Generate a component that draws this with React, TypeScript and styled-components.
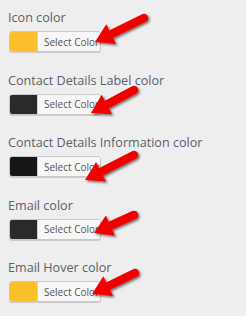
import React from "react";
import styled, { createGlobalStyle } from "styled-components";

const Global = createGlobalStyle`
  html, body { margin: 0; padding: 0; background: #eeeeee; }
  body { font-family: "Open Sans", "Noto Sans", sans-serif; }
`;

const Page = styled.div`
  position: relative;
  width: 246px;
  height: 316px;
  box-sizing: border-box;
  padding: 8px 8px 0 8px;
  overflow: hidden;
`;

const Field = styled.div`
  margin-bottom: 18.5px;
`;

const Label = styled.span`
  display: block;
  font-size: 12.6px;
  line-height: 20px;
  color: #5a6068;
  margin-bottom: 3px;
  white-space: nowrap;
`;

const ColorButton = styled.button`
  display: flex;
  align-items: stretch;
  box-sizing: border-box;
  width: 92px;
  height: 21px;
  padding: 0;
  margin: 0 0 0 1px;
  border: 1px solid #c8c8c8;
  border-radius: 3px;
  box-shadow: 0 1px 0 #cccccc;
  background: #f7f7f7;
  overflow: hidden;
  cursor: pointer;
`;

const Swatch = styled.span<{ $color: string }>`
  width: 27px;
  flex: none;
  background: ${(p) => p.$color};
`;

const ButtonText = styled.span`
  flex: 1;
  display: flex;
  align-items: center;
  padding-left: 6px;
  background: #f7f7f7;
  border-left: 1px solid #d0d0d0;
  font-family: "Open Sans", "Noto Sans", sans-serif;
  font-size: 10px;
  color: #555555;
  white-space: nowrap;
`;

const ArrowLayer = styled.svg`
  position: absolute;
  left: 0;
  top: 0;
  width: 246px;
  height: 316px;
  pointer-events: none;
  overflow: visible;
`;

type Pt = [number, number];

function Arrow({ tail, tip }: { tail: Pt; tip: Pt }) {
  const dx = tip[0] - tail[0];
  const dy = tip[1] - tail[1];
  const len = Math.hypot(dx, dy);
  const ux = dx / len;
  const uy = dy / len;
  const nx = -uy;
  const ny = ux;
  const headLen = 18;
  const headHalf = 11;
  const bx = tip[0] - ux * headLen;
  const by = tip[1] - uy * headLen;
  const head = [
    [tip[0], tip[1]],
    [bx + nx * headHalf, by + ny * headHalf],
    [bx - nx * headHalf, by - ny * headHalf],
  ]
    .map((p) => p.join(","))
    .join(" ");
  const sx = bx + ux * 2;
  const sy = by + uy * 2;
  return (
    <g filter="url(#shadow)">
      <line
        x1={tail[0]}
        y1={tail[1]}
        x2={sx}
        y2={sy}
        stroke="#f20000"
        strokeWidth={8.5}
        strokeLinecap="round"
      />
      <polygon points={head} fill="#f20000" strokeLinejoin="round" />
    </g>
  );
}

const fields = [
  { label: "Icon color", color: "#fbbf2c" },
  { label: "Contact Details Label color", color: "#2a2a2a" },
  { label: "Contact Details Information color", color: "#161616" },
  { label: "Email color", color: "#2a2a2a" },
  { label: "Email Hover color", color: "#fbbf2c" },
];

const arrows: { tail: Pt; tip: Pt }[] = [
  { tail: [144, 18], tip: [95, 42] },
  { tail: [134, 90], tip: [91, 113] },
  { tail: [134, 155], tip: [85, 180] },
  { tail: [134, 215], tip: [94, 233] },
  { tail: [135, 273], tip: [92, 294] },
];

export default function App() {
  return (
    <>
      <Global />
      <Page>
        {fields.map((f) => (
          <Field key={f.label}>
            <Label>{f.label}</Label>
            <ColorButton type="button">
              <Swatch $color={f.color} />
              <ButtonText>Select Color</ButtonText>
            </ColorButton>
          </Field>
        ))}
        <ArrowLayer viewBox="0 0 246 316">
          <defs>
            <filter id="shadow" x="-20%" y="-20%" width="140%" height="140%">
              <feDropShadow dx="1.5" dy="1.5" stdDeviation="1" floodColor="#000" floodOpacity="0.55" />
            </filter>
          </defs>
          {arrows.map((a, i) => (
            <Arrow key={i} tail={a.tail} tip={a.tip} />
          ))}
        </ArrowLayer>
      </Page>
    </>
  );
}
